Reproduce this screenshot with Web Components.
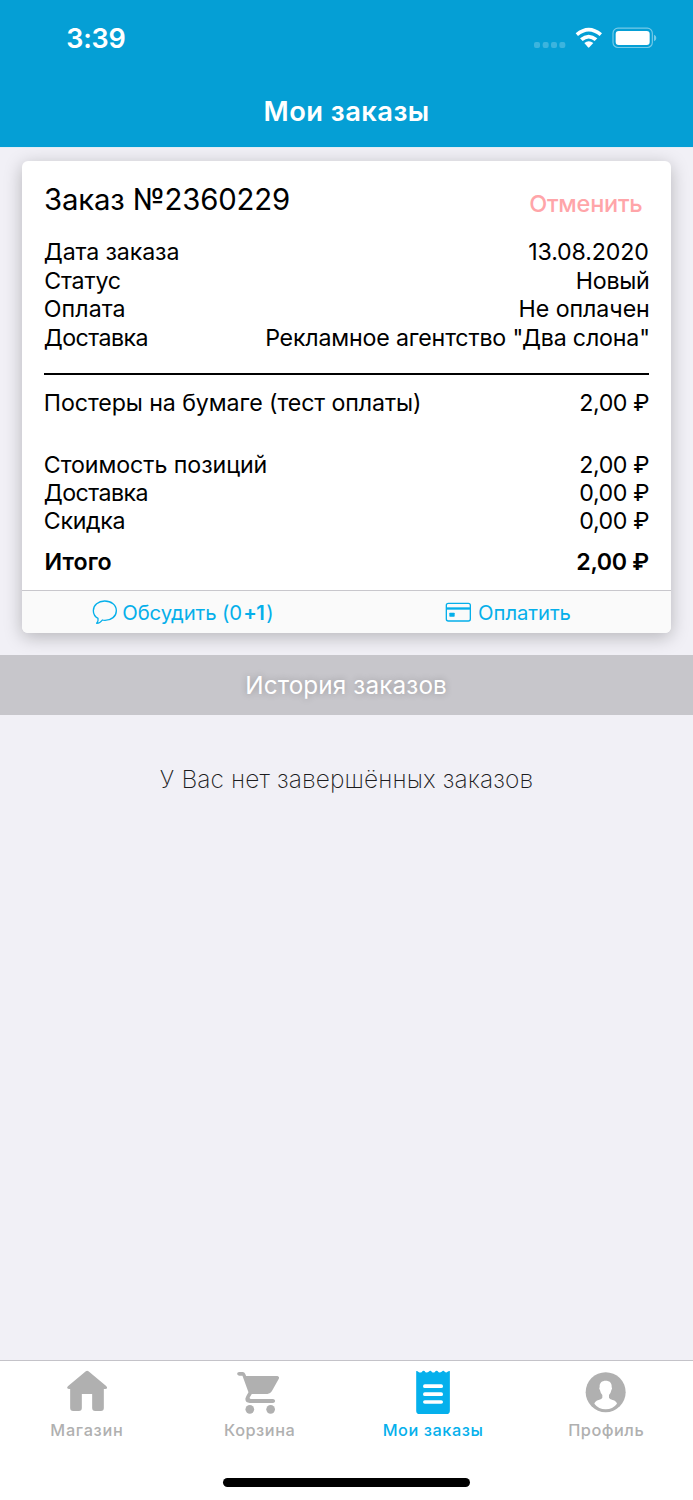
<!DOCTYPE html>
<html lang="ru">
<head>
<meta charset="utf-8">
<title>Мои заказы</title>
<style>
html,body{margin:0;height:100%}
body{font-family:Inter,"Liberation Sans",sans-serif;color:#000;background:#f1f0f6}
</style>
</head>
<body>
<orders-app></orders-app>
<script>
const define = (name, html, init) => {
  const tpl = document.createElement('template');
  tpl.innerHTML = html;
  customElements.define(name, class extends HTMLElement {
    constructor() {
      super();
      this.attachShadow({ mode: 'open' }).append(tpl.content.cloneNode(true));
    }
    connectedCallback() { if (init) init.call(this); }
  });
};

// Text run whose visible glyphs span the width given in "w"; "dx" nudges the first glyph.
const ctx = document.createElement('canvas').getContext('2d');
define('fit-text', `<style>
  :host{display:block;flex:none;white-space:nowrap;line-height:28px}
</style><slot></slot>`, function () {
  const size = this.getAttribute('size') || 23.2;
  const weight = this.getAttribute('weight') || 400;
  const w = +this.getAttribute('w');
  const dx = +(this.getAttribute('dx') || 0);
  const text = this.textContent;
  ctx.font = `${weight} ${size}px Inter, "Liberation Sans", sans-serif`;
  const m = ctx.measureText(text);
  const ink = m.actualBoundingBoxRight + m.actualBoundingBoxLeft;
  const s = this.style;
  s.fontSize = size + 'px';
  s.fontWeight = weight;
  s.width = w + 'px';
  s.textIndent = m.actualBoundingBoxLeft + dx + 'px';
  if (text.length > 1) s.letterSpacing = (w - .7 - dx - ink) / (text.length - 1) + 'px';
});

define('status-bar', `<style>
  :host{display:flex;align-items:center;height:77px;padding:0 36px 0 67.3px;box-sizing:border-box;color:#fff}
  svg{display:block;margin:0 0 2px auto}
</style>
<fit-text w="57.8" size="27" weight="600">3:39</fit-text>
<svg width="124" height="24" viewBox="99 78 372 72">
  <g fill="#fff" opacity=".22"><rect x="102" y="126" width="18" height="18" rx="6"/><rect x="128" y="126" width="18" height="18" rx="6"/><rect x="153" y="126" width="18" height="18" rx="6"/><rect x="178" y="126" width="18" height="18" rx="6"/></g>
  <g fill="#fff"><path d="M227 100Q266 67 306 100L299 108Q266 81 234 108Z"/><path d="M240 115Q266 93 292 115L284 123Q266 108 248 123Z"/><path d="M253 129Q266 119 280 129L268 142Q266 144 264 142Z"/>
  <rect x="347" y="93" width="102" height="42" rx="9"/></g>
  <rect x="339" y="84.500" width="118" height="58" rx="15" fill="none" stroke="#fff" stroke-width="3.500" opacity=".45"/>
  <path d="M462 104Q469 107 469 114Q469 121 462 124Z" fill="#fff" opacity=".45"/>
</svg>`);

define('order-card', `<style>
  :host{display:block;flex:none;height:472px;margin:14px 22px 0;background:#fff;border-radius:6px;box-shadow:0 4px 18px rgba(0,0,0,.25)}
  .body{height:429px;box-sizing:border-box;padding:25px 22px 0}
  .head{display:flex;justify-content:space-between;height:52px;padding:0 6px 0 1px}
  .cancel{color:#ffa5a9;padding-top:4px}
  .meta{display:flex;flex-direction:column;gap:.55px}
  hr{border:0;height:2px;background:#000;margin:21.300px 0 14px}
  .sum{margin-top:34px}
  .total{margin-top:13.500px}
</style>
<div class="body">
  <div class="head"><fit-text w="244.700" size="29.3">Заказ №2360229</fit-text><fit-text class="cancel" w="113.800" dx="1" size="23.5" weight="450">Отменить</fit-text></div>
  <div class="meta">
    <info-row><fit-text w="134.300">Дата заказа</fit-text><fit-text w="120.200" dx=".6">13.08.2020</fit-text></info-row>
    <info-row><fit-text w="76.700" dx=".4">Статус</fit-text><fit-text w="71.500" dx=".4">Новый</fit-text></info-row>
    <info-row><fit-text w="80.500">Оплата</fit-text><fit-text w="129" dx=".7">Не оплачен</fit-text></info-row>
    <info-row><fit-text w="103.300">Доставка</fit-text><fit-text w="383" dx="1.300">Рекламное агентство "Два слона"</fit-text></info-row>
  </div>
  <hr>
  <info-row><fit-text w="375" dx="1">Постеры на бумаге (тест оплаты)</fit-text><fit-text w="68.900" dx=".4">2,00 ₽</fit-text></info-row>
  <div class="sum">
    <info-row><fit-text w="221.500">Стоимость позиций</fit-text><fit-text w="68.900" dx=".4">2,00 ₽</fit-text></info-row>
    <info-row><fit-text w="103.300">Доставка</fit-text><fit-text w="68.900" dx=".4">0,00 ₽</fit-text></info-row>
    <info-row><fit-text w="80.500">Скидка</fit-text><fit-text w="68.900" dx=".4">0,00 ₽</fit-text></info-row>
  </div>
  <info-row class="total"><fit-text w="67.500" dx=".7" weight="600">Итого</fit-text><fit-text w="71.900" dx=".4" weight="600">2,00 ₽</fit-text></info-row>
</div>
<card-actions></card-actions>`);

define('info-row', `<style>
  :host{display:flex;justify-content:space-between;align-items:center;height:28px;padding:0 .2px 0 .8px}
</style><slot></slot>`);

define('card-actions', `<style>
  :host{display:grid;grid-template-columns:1fr 1fr;height:43px;box-sizing:border-box;border-top:1.500px solid #c8c7cc;background:#fafafa;border-radius:0 0 6px 6px;color:#05afea}
  div{display:flex;align-items:center}
  .a{padding-left:70px}.b{padding-left:98.300px}
  svg{display:block;flex:none;fill:none;stroke:#05afea}
  fit-text{padding-top:1.500px}
  .a svg{margin-right:4.300px}.b svg{margin-right:6px}
  .p{margin:0 2px 0 2.300px}
</style>
<div class="a">
  <svg width="27" height="27" viewBox="276 656 81 81" stroke-width="4"><path d="M294 714C285 709 280 701 280 691C280 674 295 662 314 662C334 662 349 674 349 691C349 708 334 720 315 720C312 720 309 720 307 719C303 725 297 729 290 729C294 725 295 719 294 714Z" stroke-linejoin="round"/></svg>
  <fit-text w="118.700" size="20.3">Обсудить (0</fit-text><fit-text class="p" w="20.700" size="20.3" weight="600">+1</fit-text><fit-text w="5.300" size="20.3" dx="-.7">)</fit-text>
</div>
<div class="b">
  <svg width="27" height="20" viewBox="294 667 81 60"><rect x="298" y="671" width="72" height="53" rx="6" stroke-width="4"/><path d="M298 686.500H370" stroke-width="7"/><rect x="307" y="699" width="16" height="12" rx="2" fill="#05afea" stroke="none"/></svg>
  <fit-text w="93.500" dx="1.300" size="20.3">Оплатить</fit-text>
</div>`);

define('section-band', `<style>
  :host{display:flex;justify-content:center;align-items:center;flex:none;height:60px;margin-top:22px;background:#c7c6cb;color:#fff;text-shadow:0 0 7px rgba(0,0,0,.25)}
</style><slot></slot>`);

define('empty-note', `<style>
  :host{display:flex;justify-content:center;flex:1;padding-top:50px;color:#1c1c1e}
</style><slot></slot>`);

define('tab-item', `<style>
  :host{display:flex;flex-direction:column;align-items:center;color:#b0b0b0;padding-top:7px}
  :host([active]){color:#05b0ec}
  ::slotted(svg){display:block;fill:currentColor;margin-bottom:3.500px}
</style><slot></slot>`);

define('tab-bar', `<style>
  :host{display:block;flex:none;height:140px;box-sizing:border-box;background:#fff;border-top:1px solid #c4c3c9}
  nav{display:grid;grid-template-columns:repeat(4,1fr);height:117px}
  svg{overflow:visible}
  .home{width:247.500px;height:8.500px;border-radius:5px;background:#000;margin:0 auto}
</style>
<nav>
  <tab-item><svg width="48" height="44" viewBox="189.500 54 144 132"><path d="M258 64Q262 60 266 64L319 108Q326 116 316 117H312V174Q312 183 303 183H286Q277 183 277 174V132H246V174Q246 183 237 183H220Q211 183 211 174V117H207Q198 115 205 108Z"/></svg><fit-text w="72" dx=".7" size="16.3" weight="450">Магазин</fit-text></tab-item>
  <tab-item><svg width="48" height="44" viewBox="707.600 54 144 132"><path d="M717 66H728Q733 66 735 71L738 78H832Q839 80 836 86L815 124Q810 132 802 132H755L749 142Q747 147 753 147H819Q825 148 825 153Q825 158 819 159H749Q734 158 736 145Q737 141 745 127L727 77H717Q711 76 711 71.500Q711 67 717 66Z"/><circle cx="749" cy="178" r="13"/><circle cx="811.500" cy="178" r="13"/></svg><fit-text w="70.700" dx=".5" size="16.3" weight="450">Корзина</fit-text></tab-item>
  <tab-item active><svg width="48" height="44" viewBox="186.400 54 144 132"><path d="M208 63Q213 63 215 66Q220 69 225 66Q228 61 233 63Q236 69 242 67Q246 65 248 63Q252 61 255 66Q260 69 264 66Q267 61 272 63Q276 69 281 67Q285 65 287 63Q291 61 294 66Q299 69 302 65Q304 63 309 63V182Q309 192 299 192H218Q208 192 208 182Z"/><path d="M234 108.500H283M234 132.500H283M234 156H283" stroke="#fff" stroke-width="11" stroke-linecap="round"/></svg><fit-text w="100.300" dx=".7" size="16.3" weight="550">Мои заказы</fit-text></tab-item>
  <tab-item><svg width="48" height="44" viewBox="706 54 144 132"><circle cx="777" cy="126.500" r="60"/><path fill="#fff" d="M777 92C788 92 796 98 795 111Q798 115 794 121Q792 131 787 135V143Q788 147 798 150Q809 153 811 161Q798 178 777 178Q756 178 743 161Q745 153 756 150Q766 147 767 143V135Q762 131 760 121Q756 115 759 111C758 98 766 92 777 92Z"/></svg><fit-text w="75.500" dx=".5" size="16.3" weight="450">Профиль</fit-text></tab-item>
</nav>
<div class="home"></div>`);

define('orders-app', `<style>
  :host{display:flex;flex-direction:column;height:1500px;background:#f1f0f6}
  header{background:#059fd5;color:#fff;height:147px;flex:none;border-bottom:1px solid #e3eef6;box-sizing:content-box}
  .title{display:flex;justify-content:center;align-items:center;height:69px}
  order-card{margin-top:13px}
</style>
<header><status-bar></status-bar><div class="title"><fit-text w="164" dx="1" size="27.3" weight="600">Мои заказы</fit-text></div></header>
<order-card></order-card>
<section-band><fit-text w="200.600" dx="1" size="24.3">История заказов</fit-text></section-band>
<empty-note><fit-text w="373.300" size="24.5" weight="250">У Вас нет завершённых заказов</fit-text></empty-note>
<tab-bar></tab-bar>`);
</script>
</body>
</html>
